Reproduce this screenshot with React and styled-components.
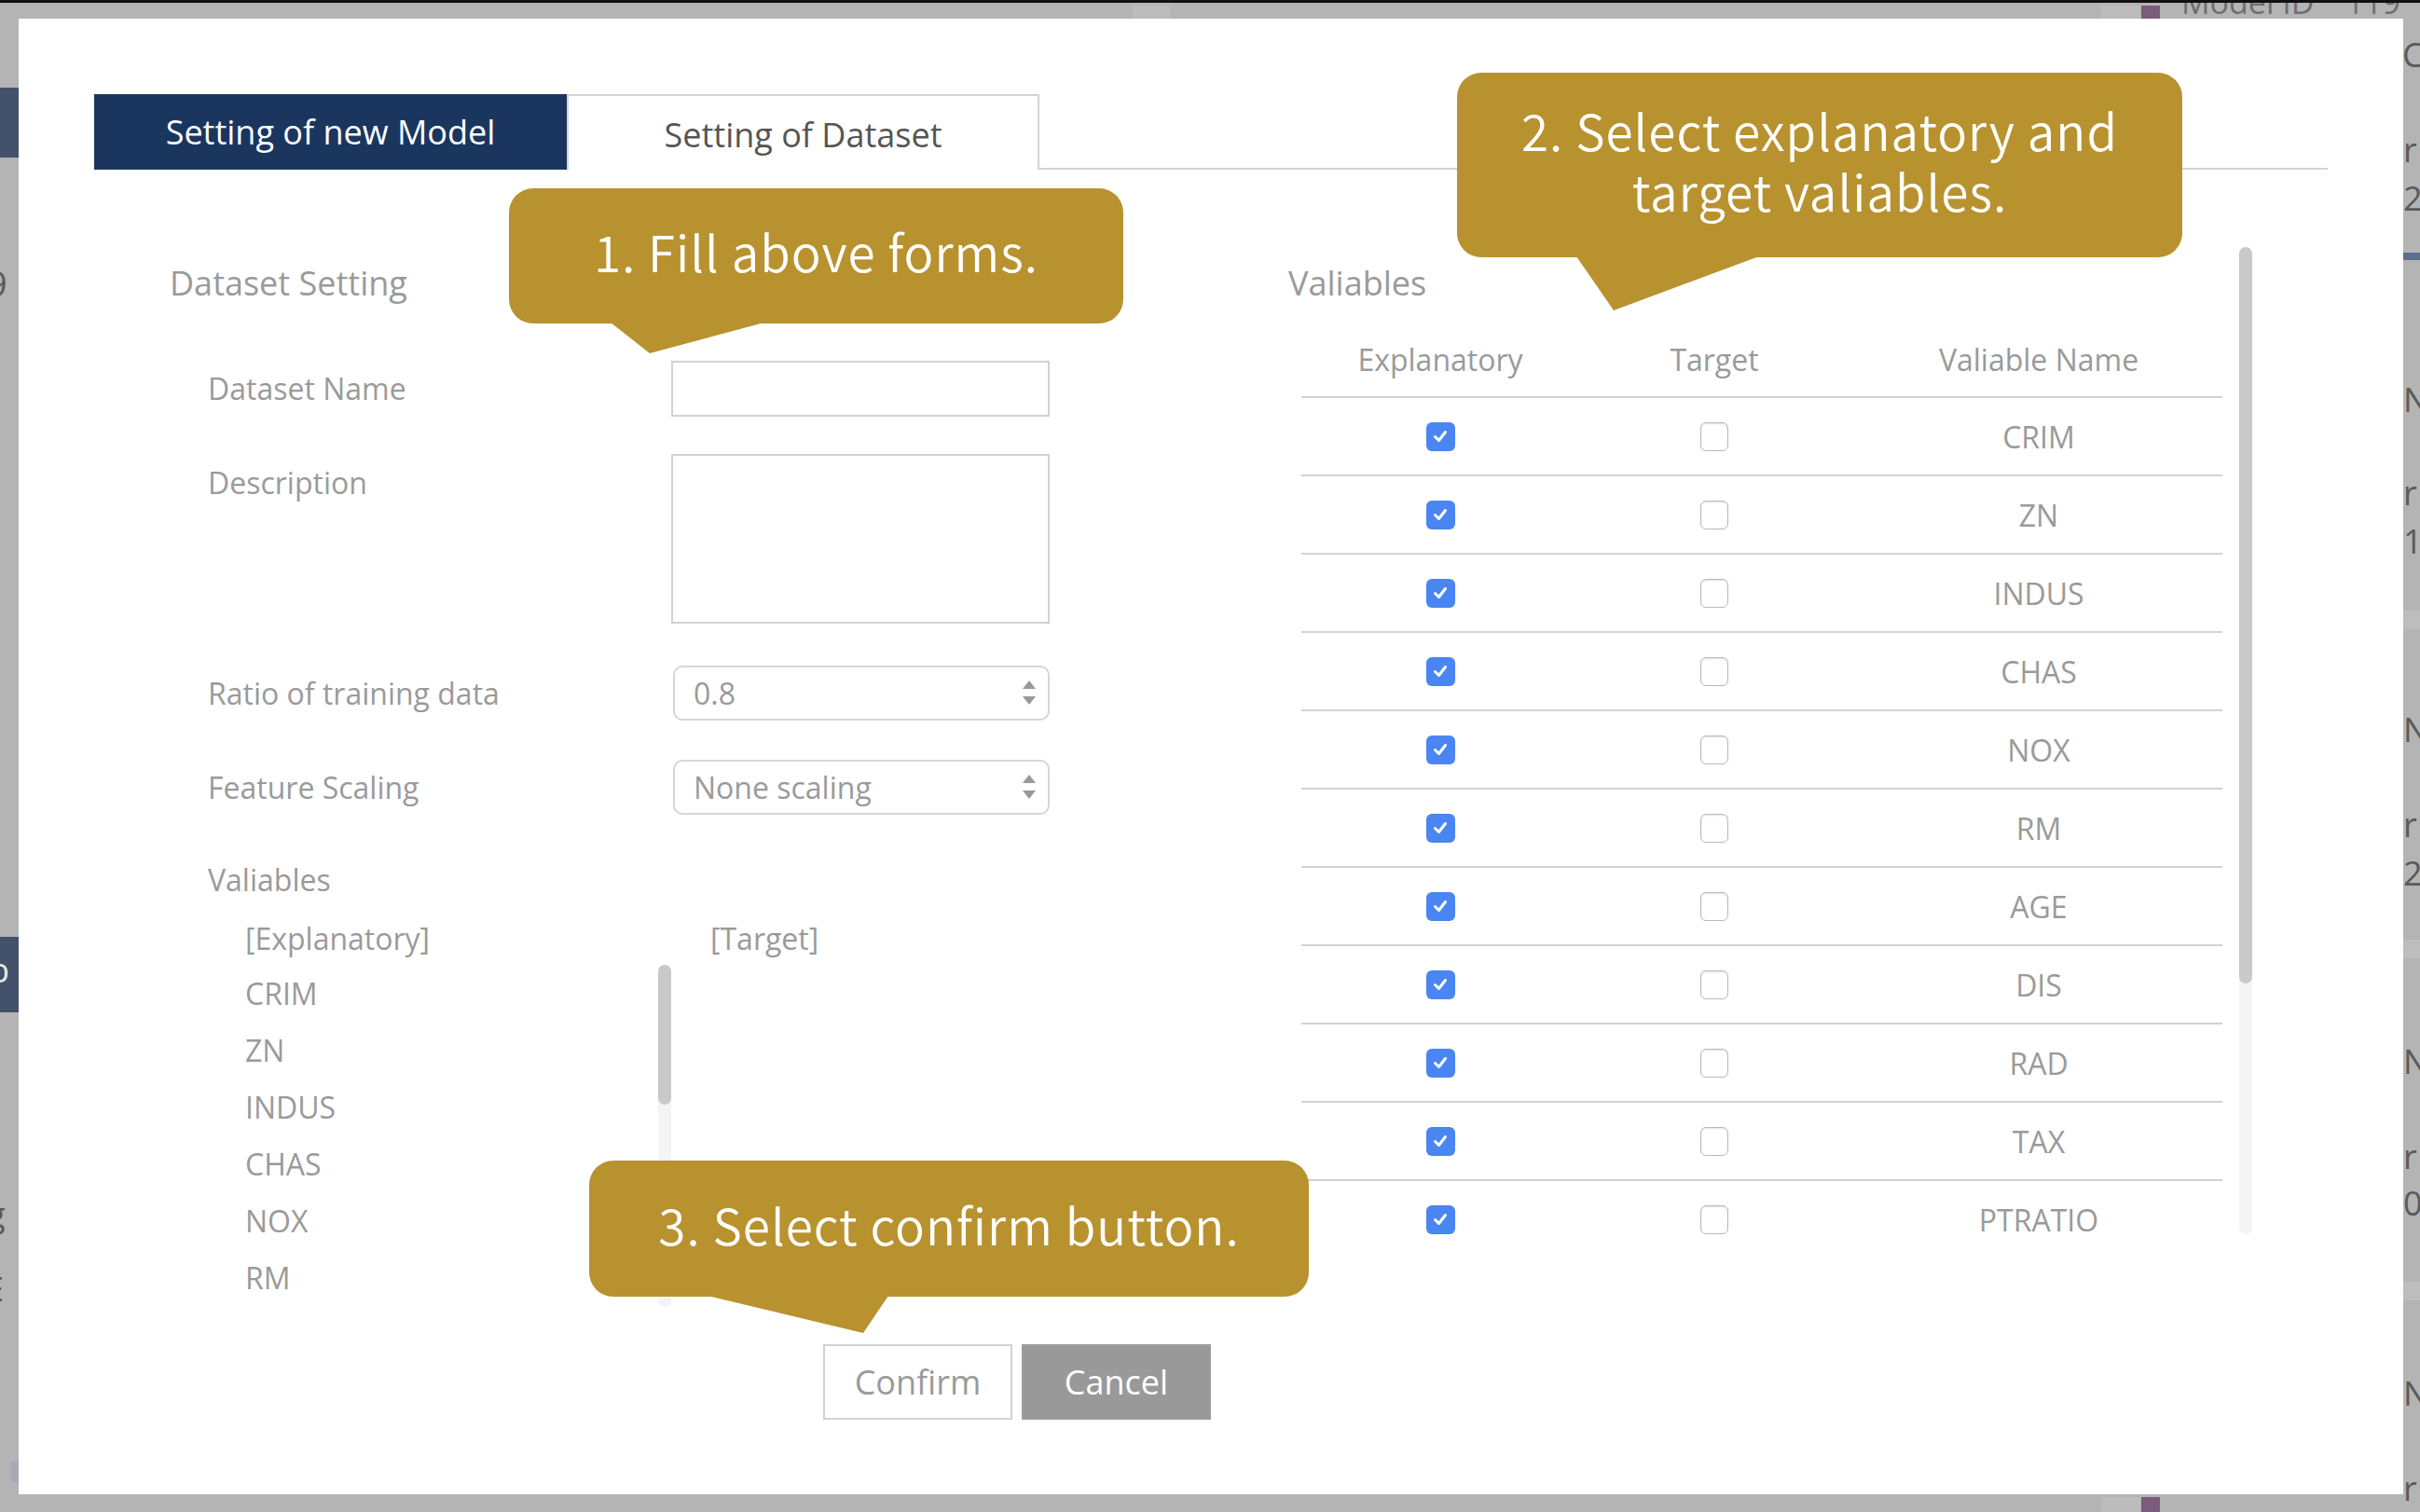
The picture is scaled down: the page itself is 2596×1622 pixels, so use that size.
import React from "react";
import styled, { createGlobalStyle, css } from "styled-components";

const GlobalStyle = createGlobalStyle`
  html, body { margin: 0; padding: 0; }
  body {
    background: #b4b4b4;
    overflow: hidden;
    font-family: "Open Sans", "Noto Sans", sans-serif;
  }
  * { box-sizing: border-box; }
`;

const Page = styled.div`
  position: relative;
  width: 2596px;
  height: 1622px;
  background: #b4b4b4;
  border-top: 3px solid #111;
  padding: 17px 18px 19px 20px;
  overflow: hidden;
`;

/* dimmed page fragments that peek out behind the modal overlay */
const Behind = styled.div`
  position: absolute;
  inset: 0;
  pointer-events: none;
`;

const Fragment = styled.div`
  position: absolute;
  left: ${(p) => p.$x}px;
  top: ${(p) => p.$y}px;
  width: ${(p) => (p.$w ? `${p.$w}px` : "auto")};
  height: ${(p) => (p.$h ? `${p.$h}px` : "auto")};
  background: ${(p) => p.$bg || "transparent"};
  color: ${(p) => p.$color || "#5a5a5a"};
  font-size: ${(p) => p.$size || 36}px;
  line-height: 1;
  white-space: nowrap;
`;

const Modal = styled.div`
  position: relative;
  z-index: 1;
  width: 2558px;
  height: 1583px;
  background: #fff;
  padding: 81px 0 0 81px;
  display: flex;
  flex-direction: column;
`;

const TabBar = styled.div`
  display: flex;
  align-items: flex-end;
  width: 2396px;
  height: 81px;
  border-bottom: 2px solid #d4d4d4;
`;

const Tab = styled.div`
  width: 507px;
  height: 81px;
  margin-bottom: -2px;
  display: flex;
  align-items: center;
  justify-content: center;
  font-size: 36px;
  ${(p) =>
    p.$active
      ? css`
          background: #1a365f;
          color: #fff;
        `
      : css`
          background: #fff;
          color: #555;
          border: 2px solid #d4d4d4;
          border-bottom: none;
          padding-top: 4px;
        `}
`;

const Body = styled.div`
  display: flex;
  align-items: flex-start;
  margin-top: 83px;
`;

const LeftCol = styled.div`
  width: 1278px;
  padding: 14px 0 0 81px;
  display: flex;
  flex-direction: column;
`;

const SectionTitle = styled.h2`
  margin: 0;
  font-size: 36px;
  font-weight: 400;
  line-height: 49px;
  color: #9a9a9a;
`;

const FormRow = styled.div`
  display: flex;
  align-items: ${(p) => (p.$top ? "flex-start" : "center")};
  margin-top: ${(p) => p.$mt}px;
  padding-left: 41px;
`;

const Label = styled.div`
  width: 497px;
  font-size: 32px;
  line-height: 44px;
  color: #9a9a9a;
  padding-top: ${(p) => (p.$top ? "9px" : "0")};
`;

const TextInput = styled.div`
  width: 406px;
  height: 60px;
  border: 2px solid #d2d2d2;
  background: #fff;
`;

const TextArea = styled.div`
  width: 406px;
  height: 182px;
  border: 2px solid #d2d2d2;
  background: #fff;
`;

const SelectBox = styled.div`
  width: 404px;
  height: 59px;
  margin-left: 2px;
  border: 2px solid #d6d6d6;
  border-radius: 10px;
  padding: 0 12px 0 20px;
  display: flex;
  align-items: center;
  justify-content: space-between;
  font-size: 32px;
  color: #9a9a9a;
`;

const SubLabel = styled.div`
  margin-top: ${(p) => p.$mt}px;
  padding-left: ${(p) => p.$pl}px;
  font-size: 32px;
  line-height: 44px;
  color: #9a9a9a;
  display: flex;
`;

const ListHeadCell = styled.div`
  width: ${(p) => p.$w}px;
`;

/* a scroll area: clipped content plus a drawn scrollbar */
const ScrollArea = styled.div`
  display: flex;
  width: ${(p) => p.$w}px;
  height: ${(p) => p.$h}px;
  margin: ${(p) => p.$m || "0"};
`;

const ScrollContent = styled.div`
  flex: 1;
  min-width: 0;
  height: 100%;
  overflow: hidden;
`;

const ScrollTrack = styled.div`
  width: 14px;
  height: 100%;
  flex-shrink: 0;
  background: #f4f4f4;
  border-radius: 7px;
`;

const ScrollThumb = styled.div`
  width: 100%;
  border-radius: 7px;
  background: #c9c9c9;
`;

const ListItem = styled.div`
  height: 61px;
  line-height: 61px;
  font-size: 32px;
  color: #9a9a9a;
`;

const RightInner = styled.div`
  padding: 14px 0 0 3px;
`;

const Table = styled.div`
  width: 988px;
  margin: 17px 0 0 14px;
`;

const TRow = styled.div`
  display: grid;
  grid-template-columns: 298px 290px 400px;
  align-items: center;
  height: ${(p) => (p.$head ? 82 : 84)}px;
  border-bottom: 2px solid #d2d2d2;
`;

const TCell = styled.div`
  display: flex;
  justify-content: center;
  align-items: center;
  font-size: 32px;
  color: #9a9a9a;
  padding-left: ${(p) => (p.$name ? "6px" : "0")};
`;

const Check = styled.span`
  display: inline-flex;
  align-items: center;
  justify-content: center;
  width: 31px;
  height: 31px;
  border-radius: 6px;
  ${(p) =>
    p.$checked
      ? css`
          background: #4a86f1;
        `
      : css`
          background: #fff;
          border: 1.5px solid #b9b9b9;
          box-shadow: inset 0 1px 2px rgba(0, 0, 0, 0.12);
          width: 30px;
        `}
`;

const ButtonRow = styled.div`
  display: flex;
  gap: 10px;
  margin: 40px 0 0 782px;
`;

const Button = styled.button`
  width: 203px;
  height: 81px;
  font-family: "Open Sans", sans-serif;
  font-size: 36px;
  padding: 0;
  cursor: pointer;
  ${(p) =>
    p.$primary
      ? css`
          background: #fff;
          color: #9a9a9a;
          border: 2px solid #d2d2d2;
        `
      : css`
          background: #999;
          color: #fff;
          border: 2px solid #9c9c9c;
        `}
`;

const Callout = styled.div`
  position: absolute;
  left: ${(p) => p.$x}px;
  top: ${(p) => p.$y}px;
  width: ${(p) => p.$w}px;
  height: ${(p) => p.$h}px;
  padding-bottom: 10px;
  background: #b8922f;
  border-radius: 26px;
  display: flex;
  align-items: center;
  justify-content: center;
  text-align: center;
  color: #fff;
  font-family: "Noto Sans CJK JP", "Noto Sans", sans-serif;
  font-weight: 350;
  font-size: 53px;
  line-height: 65px;
  letter-spacing: 1px;
  z-index: 2;
`;

const Tail = styled.svg`
  position: absolute;
  left: 0;
  top: calc(100% - 1px);
  overflow: visible;
`;

function CheckBox({ checked }) {
  return (
    <Check $checked={checked}>
      {checked && (
        <svg width="20" height="20" viewBox="0 0 20 20">
          <path
            d="M4.5 10.5 L8.5 14.5 L15.5 5.5"
            fill="none"
            stroke="#fff"
            strokeWidth="3"
            strokeLinecap="round"
            strokeLinejoin="round"
          />
        </svg>
      )}
    </Check>
  );
}

function Arrows() {
  return (
    <svg width="16" height="30" viewBox="0 0 16 30">
      <path d="M8 1 L15 10 L1 10 Z" fill="#999" />
      <path d="M1 18 L15 18 L8 27 Z" fill="#999" />
    </svg>
  );
}

function Bubble({ x, y, w, h, tail, tailH, children }) {
  return (
    <Callout $x={x} $y={y} $w={w} $h={h}>
      <div>{children}</div>
      <Tail width={w} height={tailH + 1}>
        <polygon points={tail} fill="#b8922f" />
      </Tail>
    </Callout>
  );
}

const vars = [
  "CRIM", "ZN", "INDUS", "CHAS", "NOX", "RM", "AGE",
  "DIS", "RAD", "TAX", "PTRATIO", "B", "LSTAT", "MEDV",
];

export default function App() {
  return (
    <>
      <GlobalStyle />
      <Page>
        <Behind>
          <Fragment $x={0} $y={91} $w={20} $h={75} $bg="#43516a" />
          <Fragment $x={-14} $y={282} $size={38}>9</Fragment>
          <Fragment $x={0} $y={1002} $w={20} $h={81} $bg="#43516a" />
          <Fragment $x={-12} $y={1020} $size={36} $color="#e6e6e6">b</Fragment>
          <Fragment $x={-14} $y={1282} $size={36}>g</Fragment>
          <Fragment $x={-16} $y={1362} $size={36}>E</Fragment>
          <Fragment $x={12} $y={1565} $w={8} $h={22} $bg="#a4abb6" />
          <Fragment $x={1215} $y={3} $w={40} $h={17} $bg="#bcbcbc" />
          <Fragment $x={2254} $y={3} $w={42} $h={17} $bg="#bcbcbc" />
          <Fragment $x={2297} $y={3} $w={20} $h={17} $bg="#7b5c7d" />
          <Fragment $x={2340} $y={-18} $size={34} $color="#6e6e6e">Model ID　119</Fragment>
          <Fragment $x={2254} $y={1603} $w={42} $h={19} $bg="#bcbcbc" />
          <Fragment $x={2297} $y={1603} $w={20} $h={19} $bg="#7b5c7d" />
          <Fragment $x={2578} $y={268} $w={18} $h={8} $bg="#5d6f8c" />
          <Fragment $x={2577} $y={38} $size={36}>C</Fragment>
          <Fragment $x={2578} $y={140} $size={36}>r</Fragment>
          <Fragment $x={2578} $y={192} $size={36}>2</Fragment>
          <Fragment $x={2578} $y={408} $size={36}>N</Fragment>
          <Fragment $x={2578} $y={508} $size={36}>r</Fragment>
          <Fragment $x={2578} $y={560} $size={36}>1</Fragment>
          <Fragment $x={2578} $y={652} $w={18} $h={20} $bg="#bdbdbd" />
          <Fragment $x={2578} $y={762} $size={36}>N</Fragment>
          <Fragment $x={2578} $y={864} $size={36}>r</Fragment>
          <Fragment $x={2578} $y={916} $size={36}>2</Fragment>
          <Fragment $x={2578} $y={1005} $w={18} $h={20} $bg="#bdbdbd" />
          <Fragment $x={2578} $y={1118} $size={36}>N</Fragment>
          <Fragment $x={2578} $y={1220} $size={36}>r</Fragment>
          <Fragment $x={2578} $y={1270} $size={36}>0</Fragment>
          <Fragment $x={2578} $y={1372} $w={18} $h={20} $bg="#bdbdbd" />
          <Fragment $x={2578} $y={1474} $size={36}>N</Fragment>
          <Fragment $x={2578} $y={1576} $size={36}>r</Fragment>
        </Behind>

        <Modal>
          <TabBar>
            <Tab $active>Setting of new Model</Tab>
            <Tab>Setting of Dataset</Tab>
          </TabBar>

          <Body>
            <LeftCol>
              <SectionTitle>Dataset Setting</SectionTitle>
              <FormRow $mt={59}>
                <Label>Dataset Name</Label>
                <TextInput />
              </FormRow>
              <FormRow $mt={40} $top>
                <Label $top>Description</Label>
                <TextArea />
              </FormRow>
              <FormRow $mt={45}>
                <Label>Ratio of training data</Label>
                <SelectBox>
                  <span>0.8</span>
                  <Arrows />
                </SelectBox>
              </FormRow>
              <FormRow $mt={42}>
                <Label>Feature Scaling</Label>
                <SelectBox>
                  <span>None scaling</span>
                  <Arrows />
                </SelectBox>
              </FormRow>
              <SubLabel $mt={48} $pl={41}>Valiables</SubLabel>
              <SubLabel $mt={19} $pl={81}>
                <ListHeadCell $w={499}>[Explanatory]</ListHeadCell>
                <ListHeadCell $w={300}>[Target]</ListHeadCell>
              </SubLabel>
              <ScrollArea $w={457} $h={367} $m="6px 0 0 81px">
                <ScrollContent>
                  {vars.map((v) => (
                    <ListItem key={v}>{v}</ListItem>
                  ))}
                </ScrollContent>
                <ScrollTrack>
                  <ScrollThumb style={{ height: 150 }} />
                </ScrollTrack>
              </ScrollArea>
            </LeftCol>

            <ScrollArea $w={1037} $h={1059}>
              <ScrollContent>
                <RightInner>
                  <SectionTitle>Valiables</SectionTitle>
                  <Table>
                    <TRow $head>
                      <TCell>Explanatory</TCell>
                      <TCell>Target</TCell>
                      <TCell $name>Valiable Name</TCell>
                    </TRow>
                    {vars.map((v) => (
                      <TRow key={v}>
                        <TCell><CheckBox checked /></TCell>
                        <TCell><CheckBox /></TCell>
                        <TCell $name>{v}</TCell>
                      </TRow>
                    ))}
                  </Table>
                </RightInner>
              </ScrollContent>
              <ScrollTrack>
                <ScrollThumb style={{ height: 790 }} />
              </ScrollTrack>
            </ScrollArea>
          </Body>

          <ButtonRow>
            <Button $primary>Confirm</Button>
            <Button>Cancel</Button>
          </ButtonRow>

          <Bubble x={526} y={182} w={659} h={145} tail="109,0 151,33 274,0" tailH={33}>
            1. Fill above forms.
          </Bubble>
          <Bubble x={1543} y={58} w={778} h={198} tail="128,0 168,58 324,0" tailH={58}>
            2. Select explanatory and
            <br />
            target valiables.
          </Bubble>
          <Bubble x={612} y={1225} w={772} h={146} tail="127,0 294,40 321,0" tailH={40}>
            3. Select confirm button.
          </Bubble>
        </Modal>
      </Page>
    </>
  );
}
